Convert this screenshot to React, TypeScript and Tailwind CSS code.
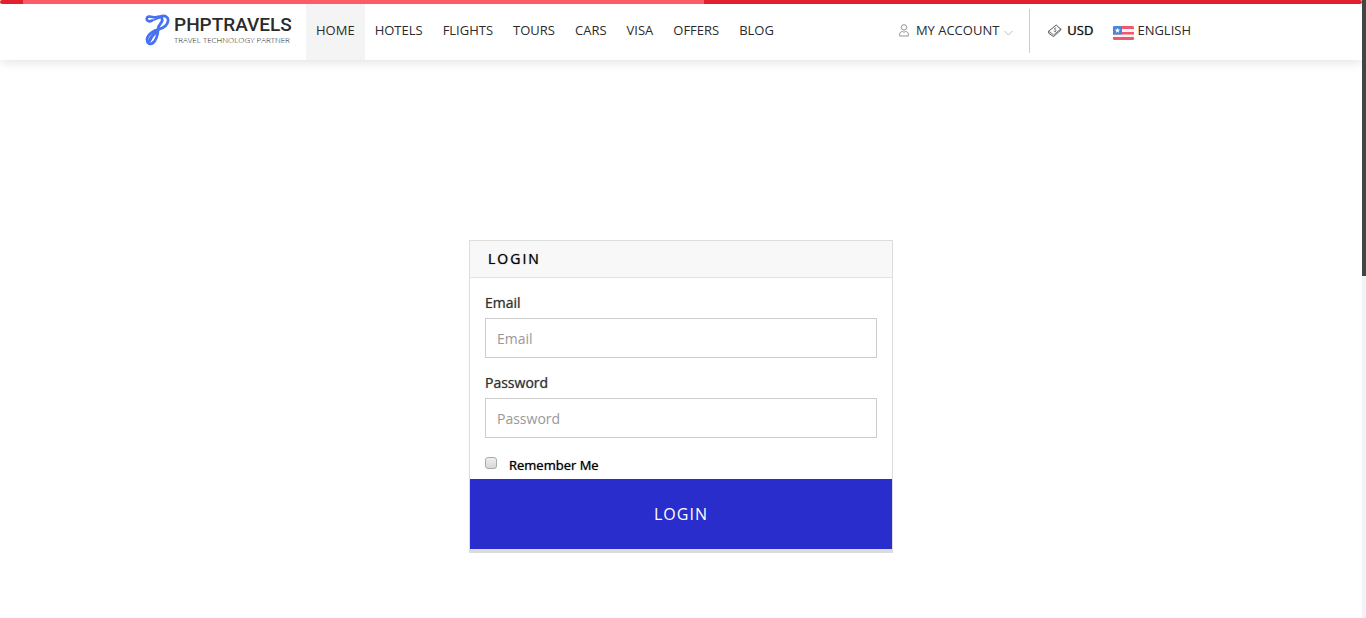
import React from "react";

const links = ["HOTELS", "FLIGHTS", "TOURS", "CARS", "VISA", "OFFERS", "BLOG"];

function Logo() {
  return (
    <a href="#" aria-label="PHPTRAVELS" className="flex h-14 w-[161px] shrink-0 items-center gap-1 pb-1">
      <svg width="25" height="32" viewBox="0 0 25 32" fill="none" stroke="#4571f2" strokeLinecap="round" strokeLinejoin="round" className="shrink-0">
        <path d="M6.8 6.6C4.5 8 1.6 7 1.7 4.8C1.8 2.4 4.5 2 7.5 3.1C10.5 4.2 13 3 16 2.2C20.5 1.1 23.6 3.4 23.1 6.8C22.5 11 18.5 14.2 13.5 15.4" strokeWidth="2.7" />
        <path d="M6.8 6.6C11 6 13 3.4 17.5 3.6" strokeWidth="1.6" />
        <path d="M17 5C18.8 8 13.6 10 13.2 14.5C12.8 20 12 26 8 28.8" strokeWidth="2.8" />
        <path d="M13.5 15.4C8.5 16.5 2.2 20.5 2 25.6C1.9 29.4 5.2 31 8 28.8" strokeWidth="2.8" />
        <path d="M11.5 17.5C8.5 20 6 22.5 4.4 27.2" strokeWidth="3" />
      </svg>
      <span className="flex flex-col whitespace-nowrap font-[Roboto,sans-serif]">
        <span className="font-[Roboto] text-[19px] leading-5 font-medium text-[#2b2b2b]">PHPTRAVELS</span>
        <span className="font-['Open_Sans'] text-[8px] leading-[10px] font-light text-[#222]">TRAVEL TECHNOLOGY PARTNER</span>
      </span>
    </a>
  );
}

function UserIcon() {
  return (
    <svg width="10" height="13" viewBox="0 0 10 13" fill="none" stroke="#888" strokeWidth="0.9">
      <circle cx="5" cy="3.4" r="2.7" />
      <path d="M.7 12V10.2C.7 8.5 1.8 7.8 3.5 7.5L5 8.3L6.5 7.5C8.2 7.8 9.3 8.5 9.3 10.2V12Z" />
    </svg>
  );
}

function MoneyIcon() {
  return (
    <svg width="14" height="14" viewBox="0 0 14 14" fill="none" stroke="#444" strokeWidth="0.9">
      <path d="M.7 7.2L8.2 1L13.2 5.6L5.6 12.6L.7 9.2Z" />
      <path d="M.7 7.2L5.6 10.9L13.2 4.6" strokeWidth="0.7" />
      <path d="M8.2 4.2C7.1 3.7 6.1 4.4 6.6 5.3C7.1 6.2 8.5 6 8 7C7.6 7.8 6.4 7.6 5.8 7" strokeWidth="0.8" />
    </svg>
  );
}

function FlagIcon() {
  return (
    <svg width="21" height="14" viewBox="0 0 21 14">
      <rect width="21" height="14" rx="1.5" fill="#f5f5f5" />
      <path d="M1.5 0H19.5Q21 0 21 1.5V3H0V1.5Q0 0 1.5 0ZM0 6H21V8.5H0ZM0 11H21V12.5Q21 14 19.5 14H1.5Q0 14 0 12.5Z" fill="#f2576a" />
      <path d="M1.5 0H9V8.5H0V1.5Q0 0 1.5 0Z" fill="#4a87dc" />
      <path d="M4.5 1.8L5.2 3.6L7.1 3.7L5.6 4.9L6.1 6.8L4.5 5.7L2.9 6.8L3.4 4.9L1.9 3.7L3.8 3.6Z" fill="#fff" />
    </svg>
  );
}

function Field({ id, label, type }: { id: string; label: string; type: string }) {
  return (
    <div className="flex flex-col gap-[3px]">
      <label htmlFor={id} className="text-sm leading-6 text-[#333] [text-shadow:0_0_1px_#777]">{label}</label>
      <input id={id} type={type} placeholder={label} className="h-10 w-full border border-[#ccc] bg-white px-[11px] text-sm text-[#333] outline-none placeholder:text-[#999]" />
    </div>
  );
}

export default function App() {
  return (
    <div className="flex min-h-screen bg-white font-['Open_Sans','Noto_Sans',sans-serif]">
      <div className="min-w-0 flex-1">
        <div className="flex h-1 overflow-hidden rounded-full bg-[#e7222f]">
          <span className="ml-[1.7%] w-1/2 bg-[#fb5c68]" />
        </div>
        <header className="h-14 bg-white shadow-[0_2px_10px_rgba(0,0,0,0.12)]">
          <div className="mx-auto flex h-14 max-w-[1072px] text-[13px] text-[#2b2b2b]">
            <Logo />
            <nav className="flex">
              <a href="#" className="flex items-center bg-[#f4f4f4] px-[10px] pb-[3px]">HOME</a>
              {links.map((link) => (
                <a key={link} href="#" className="flex items-center px-[10px] pb-[3px]">{link}</a>
              ))}
            </nav>
            <div className="ml-auto flex items-center pr-[26px] pb-[3px]">
              <button type="button" className="flex items-center gap-[7px] pr-4">
                <UserIcon />
                <span className="flex items-center gap-[5px]">
                  MY ACCOUNT
                  <svg width="9" height="6" viewBox="0 0 9 6" fill="none" stroke="#bbb" className="mt-1"><path d="M.5 1L4.5 5L8.5 1" /></svg>
                </span>
              </button>
              <span className="h-11 w-px bg-[#ccc]" />
              <button type="button" className="ml-[18px] flex items-center gap-[5px] text-[#111] [text-shadow:0_0_1px_#555]">
                <MoneyIcon />USD
              </button>
              <button type="button" className="ml-5 flex items-center gap-[3px]"><span className="pt-1"><FlagIcon /></span>ENGLISH</button>
            </div>
          </div>
        </header>
        <main className="flex justify-center px-4 pt-[180px] pb-16">
          <form className="w-full max-w-[424px] border border-[#ddd] bg-white shadow-[0_3px_0_#dcdcdc]" onSubmit={(e) => e.preventDefault()}>
            <h1 className="border-b border-[#e3e3e3] bg-[#f8f8f8] px-[18px] text-sm leading-9 tracking-[2px] text-black [text-shadow:0_0_1px_#555]">LOGIN</h1>
            <div className="flex flex-col gap-[13px] px-[15px] pt-[13px] pb-1">
              <Field id="email" label="Email" type="email" />
              <Field id="password" label="Password" type="password" />
              <div className="flex items-center gap-3 pt-1">
                <input id="remember" type="checkbox" className="mb-1 size-3 appearance-none rounded-[3px] border border-[#aaa] bg-linear-to-b from-[#eee] to-[#d8d8d8] checked:bg-[#282dcb]" />
                <label htmlFor="remember" className="text-[13px] leading-5 text-black [text-shadow:0_0_1px_#555]">Remember Me</label>
              </div>
            </div>
            <button type="submit" className="h-[70px] w-full bg-[#282dcb] text-base tracking-[1px] text-white">LOGIN</button>
          </form>
        </main>
      </div>
      <div className="w-1 shrink-0 bg-[#f2f2f8]"><div className="h-[276px] bg-[#444442]" /></div>
    </div>
  );
}
